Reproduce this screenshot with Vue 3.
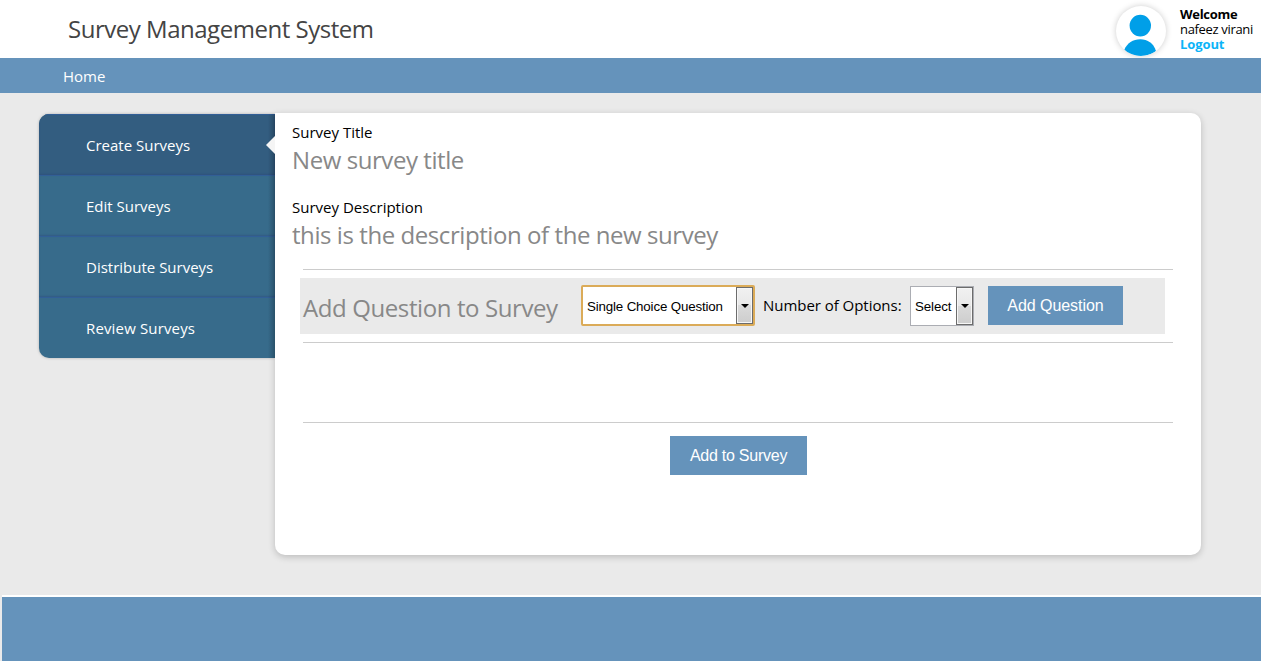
<script setup>
const menu = [
  { label: 'Create Surveys', cls: 'm1', active: true },
  { label: 'Edit Surveys', cls: 'm2' },
  { label: 'Distribute Surveys', cls: 'm3' },
  { label: 'Review Surveys', cls: 'm4' },
]
</script>

<template>
  <div class="page">
    <header class="top">
      <h1 class="brand">Survey Management System</h1>
      <div class="user">
        <div class="avatar">
          <svg viewBox="0 0 50 50" width="50" height="50">
            <ellipse cx="24.300" cy="19.600" rx="10.700" ry="10.900" fill="#009fe8" />
            <path d="M8.200 44C11 37.300 17 33.300 24.300 33.300S37.500 37.300 40 45C36 48.500 30.500 50 24.500 50S12 48.500 8.200 44Z" fill="#009fe8" />
          </svg>
        </div>
        <div class="who">
          <div class="welcome">Welcome</div>
          <div class="name">nafeez virani</div>
          <a class="logout">Logout</a>
        </div>
      </div>
    </header>
    <nav class="bar"><a class="home">Home</a></nav>
    <main class="main">
      <ul class="menu">
        <li v-for="m in menu" :key="m.label" :class="{ active: m.active }">
          <span :class="m.cls">{{ m.label }}</span>
        </li>
      </ul>
      <section class="panel">
        <div class="label l1">Survey Title</div>
        <div class="value v1">New survey title</div>
        <div class="label l2">Survey Description</div>
        <div class="value v2">this is the description of the new survey</div>
        <div class="rule"></div>
        <div class="strip">
          <span class="value v3">Add Question to Survey</span>
          <div class="select focus">
            <span class="choice">Single Choice Question</span>
            <i class="drop"><svg width="8" height="4"><path d="M0 0H8L4 4Z" /></svg></i>
          </div>
          <span class="num">Number of Options:</span>
          <div class="select small">
            <span class="pick">Select</span>
            <i class="drop"><svg width="8" height="4"><path d="M0 0H8L4 4Z" /></svg></i>
          </div>
          <button class="btn b1">Add Question</button>
        </div>
        <div class="rule"></div>
        <div class="questions"></div>
        <div class="rule"></div>
        <button class="btn b2">Add to Survey</button>
      </section>
    </main>
    <footer class="foot"></footer>
  </div>
</template>

<style>
html, body { margin: 0; background: #eaeaea; overflow: hidden; }
</style>

<style scoped>
.page { width: 1261px; height: 661px; background: #eaeaea; font-family: "Open Sans", "Noto Sans", sans-serif; font-size: 15px; color: #000; white-space: nowrap; display: flex; flex-direction: column; overflow: hidden; }
.top { height: 58px; background: #fff; display: flex; justify-content: space-between; flex: none; }
.brand { margin: 12px 0 0 68px; font-size: 24px; line-height: 33px; font-weight: 400; color: #444; letter-spacing: -.48px; }
.user { display: flex; width: 145px; }
.avatar { width: 50px; height: 50px; margin-top: 6px; border-radius: 50%; background: #fff; box-shadow: 0 0 6px rgba(0,0,0,.2); overflow: hidden; flex: none; }
.avatar svg { display: block; }
.who { margin: 7px 0 0 14px; font-size: 13px; line-height: 15px; }
.welcome, .logout { font-weight: 700; font-size: 13px; }
.welcome { letter-spacing: -.3px; }
.name { letter-spacing: -.33px; }
.logout { color: #0cb4f8; display: block; letter-spacing: -.1px; }
.bar { height: 35px; flex: none; background: #6593bb; color: #fff; line-height: 36px; padding-left: 63px; }
.main { display: flex; height: 502px; flex: none; align-items: flex-start; }
.menu { list-style: none; margin: 21px 0 0 39px; padding: 0; width: 236px; height: 244px; border-radius: 10px 0 0 10px; overflow: hidden; background: #376b8b; color: #fff; box-shadow: 0 0 3px rgba(0,0,0,.25); position: relative; }
.menu::after { content: ""; position: absolute; right: 0; top: 0; width: 7px; height: 100%; background: linear-gradient(to right, transparent, rgba(0,0,0,.16)); }
.menu li { height: 61px; box-sizing: border-box; padding-left: 47px; line-height: 61px; border-top: 1px solid #325f97; box-shadow: inset 0 -1px 2px rgba(40,60,120,.35); position: relative; }
.menu li:last-child { box-shadow: none; }
.menu .active { background: #335d80; }
.menu .active::after { content: ""; position: absolute; z-index: 1; right: 0; top: 21px; border: 9px solid transparent; border-left-width: 0; border-right-color: #f5f5f5; }
.m4 { letter-spacing: .15px; }
.panel { margin-top: 20px; width: 926px; height: 442px; box-sizing: border-box; background: #fff; border-radius: 0 10px 10px 10px; box-shadow: 0 2px 7px rgba(0,0,0,.2); padding: 8px 28px 0 17px; position: relative; }
.label { line-height: 22px; }
.value { font-size: 24px; line-height: 34px; color: #888; letter-spacing: -.43px; }
.l2 { margin-top: 19px; }
.rule { height: 1px; background: #ccc; margin: 0 0 0 11px; width: 870px; }
.v2 + .rule { margin-top: 17px; }
.strip { margin: 8px 0 8px 8px; width: 865px; height: 56px; background: #eaeaea; display: flex; align-items: flex-start; }
.v3 { width: 279px; padding-left: 3px; box-sizing: border-box; line-height: 60px; letter-spacing: -.4px; }
.select { box-sizing: border-box; height: 40px; margin-top: 8px; background: #fff; border: 1px solid #abadb3; display: flex; justify-content: space-between; font: 13.333px/39px "Liberation Sans", Arial, sans-serif; padding-left: 4px; }
.focus { width: 174px; margin-left: 2px; border: 2px solid #dbab58; border-radius: 2px; line-height: 39px; height: 41px; margin-top: 7px; }
.choice { letter-spacing: -.16px; }
.pick { letter-spacing: -.1px; }
.small { width: 64px; margin-left: 7px; }
.drop { width: 17px; box-sizing: border-box; border: 1px solid #6c6c6c; box-shadow: inset 0 0 0 1px #f6f6f6; background: linear-gradient(#f1f1f1 0%, #e8e8e8 50%, #dadada 50%, #cdcdcd 100%); display: flex; align-items: center; justify-content: center; }
.drop svg { display: block; }
.num { line-height: 54px; width: 140px; margin-left: 8px; letter-spacing: -.04px; }
.btn { background: #6593bb; color: #fff; border: 0; padding: 0; margin: 0; height: 39px; font: 16px/39px "Liberation Sans", Arial, sans-serif; }
.b1 { width: 135px; margin: 8px 0 0 14px; letter-spacing: -.05px; }
.questions { height: 79px; }
.b2 { display: block; width: 137px; margin: 13px 0 0 378px; letter-spacing: -.25px; }
.foot { height: 64px; margin-left: 2px; border-top: 2px solid #fff; background: #6593bb; flex: none; }
</style>
